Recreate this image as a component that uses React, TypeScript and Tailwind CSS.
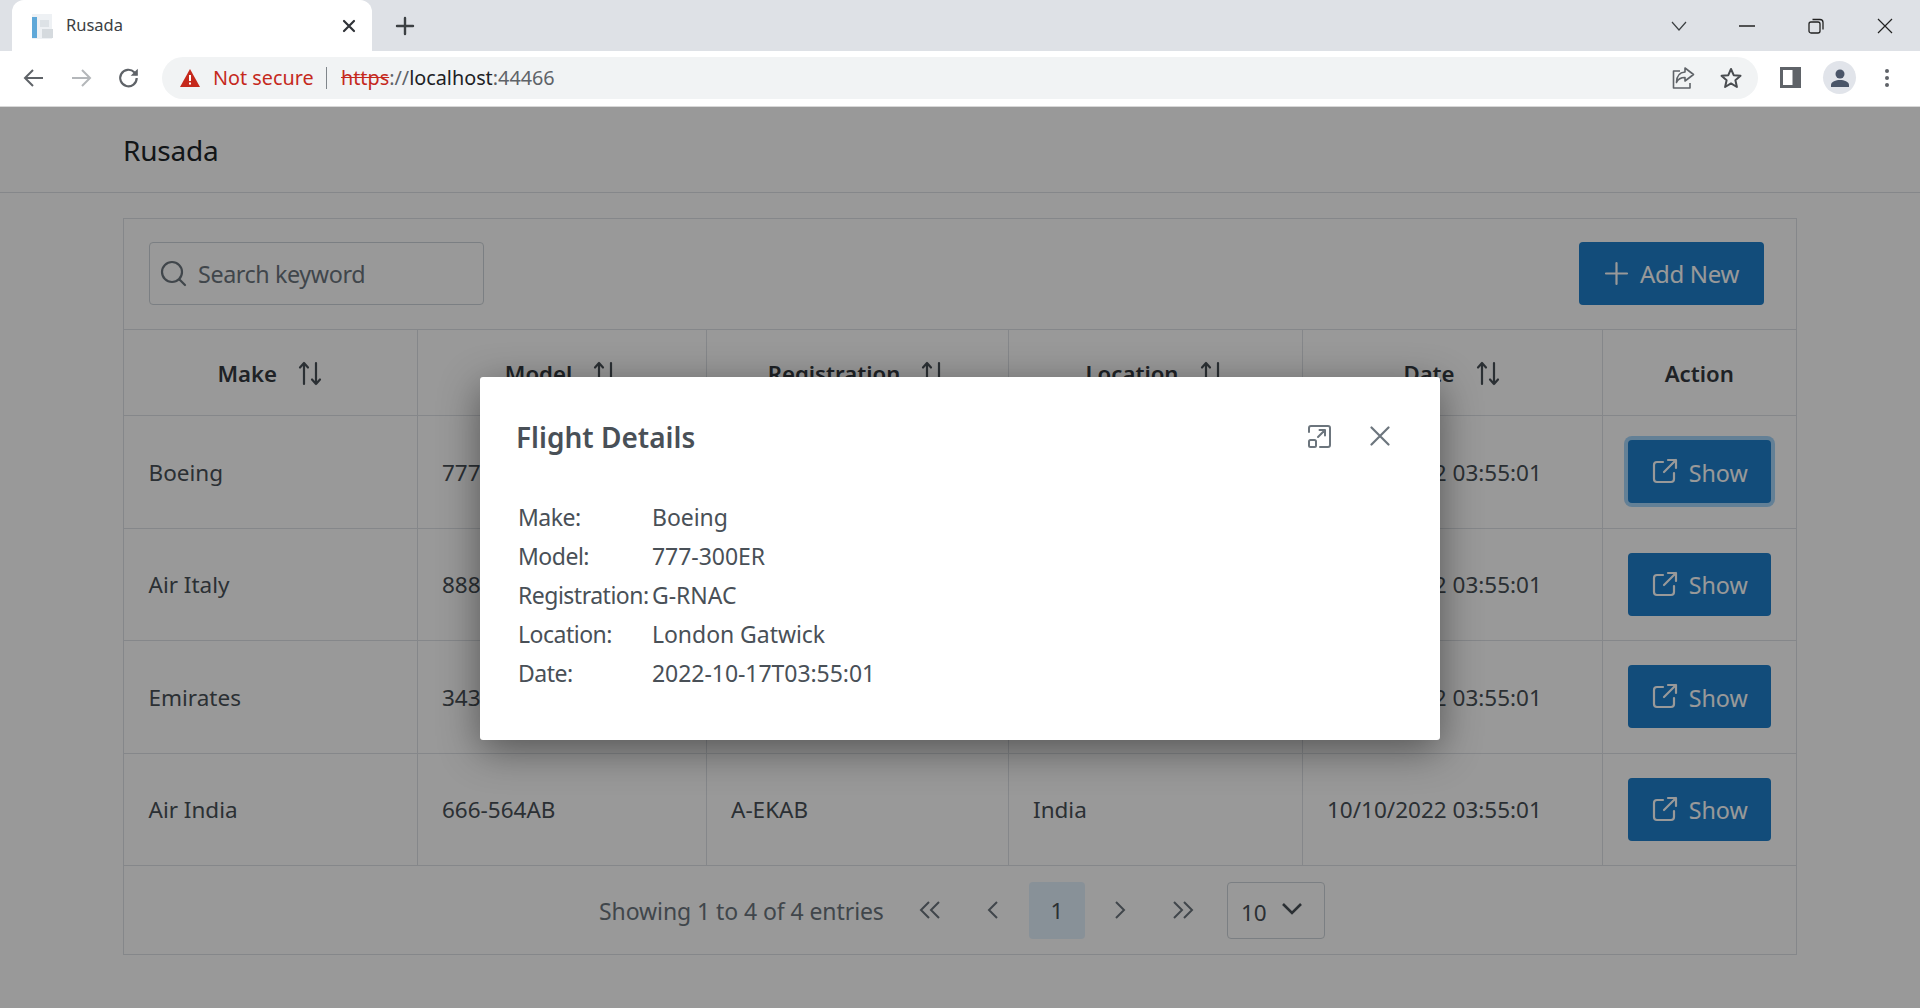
import React from "react";

const rows = [
  ["Boeing", "777-300ER", "G-RNAC", "London Gatwick", "10/17/2022 03:55:01"],
  ["Air Italy", "888-200ER", "A-ITAL", "Italy", "10/16/2022 03:55:01"],
  ["Emirates", "343-400", "U-EMRT", "Dubai", "10/15/2022 03:55:01"],
  ["Air India", "666-564AB", "A-EKAB", "India", "10/10/2022 03:55:01"],
];
const heads = ["Make", "Model", "Registration", "Location", "Date"];
const details = [
  ["Make:", "Boeing"],
  ["Model:", "777-300ER"],
  ["Registration:", "G-RNAC"],
  ["Location:", "London Gatwick"],
  ["Date:", "2022-10-17T03:55:01"],
];

function Sort() {
  return (
    <svg width="26" height="26" viewBox="0 0 26 26" fill="none" stroke="#495057" strokeWidth="2.2" strokeLinecap="round" strokeLinejoin="round">
      <path d="M7 24V3M3 7.500 7 3l4 4.500" />
      <path d="M19 3v21M15 19.500l4 4.500 4-4.500" />
    </svg>
  );
}

function ShowIcon() {
  return (
    <svg width="27" height="27" viewBox="0 0 27 27" fill="none" stroke="currentColor" strokeWidth="2.2" strokeLinecap="round" strokeLinejoin="round">
      <path d="M12 4H6a3 3 0 0 0-3 3v14a3 3 0 0 0 3 3h14a3 3 0 0 0 3-3v-6" />
      <path d="M13 14 25 2M17 2h8v8" />
    </svg>
  );
}

function Tabstrip() {
  return (
    <div className="h-[51px] bg-[#dee1e6] flex items-end pl-[12px] relative shrink-0">
      <div className="w-[360px] h-[51px] bg-white rounded-t-[12px] flex items-center pl-[17px] pr-[16px]">
        <svg width="26" height="28" viewBox="0 0 26 28" className="shrink-0">
          <rect x="3" y="2" width="20" height="25" fill="#eef1f4" />
          <rect x="3" y="5" width="5" height="21" fill="#5fa8d8" />
          <rect x="11" y="8" width="9" height="7" fill="#dde2e6" />
          <rect x="13" y="17" width="11" height="9" fill="#d5dade" />
        </svg>
        <span className="ml-[11px] text-[16.5px] text-[#3c4043] font-['Noto_Sans',sans-serif] flex-1">Rusada</span>
        <svg width="14" height="14" viewBox="0 0 14 14" stroke="#303338" strokeWidth="2.2" strokeLinecap="round">
          <path d="M2 2l10 10M12 2 2 12" />
        </svg>
      </div>
      <div className="h-[51px] flex items-center ml-[23px]">
        <svg width="20" height="20" viewBox="0 0 20 20" stroke="#3c4043" strokeWidth="2.4" strokeLinecap="round">
          <path d="M10 2v16M2 10h16" />
        </svg>
      </div>
      <div className="flex-1 h-[51px] flex items-center justify-end">
        <div className="flex items-center gap-[53px] pr-[27px]">
          <svg width="18" height="12" viewBox="0 0 18 12" fill="none" stroke="#3c4043" strokeWidth="1.2" className="mr-[-2px]"><path d="M2 2l7 8 7-8" /></svg>
          <svg width="16" height="2" viewBox="0 0 16 2" stroke="#222" strokeWidth="1.5"><path d="M0 1h16" /></svg>
          <svg width="16" height="16" viewBox="0 0 16 16" fill="none" stroke="#222" strokeWidth="1.3"><rect x="1" y="4" width="11" height="11" rx="2" /><path d="M4.500 1.500h7.500a3 3 0 0 1 3 3v7" /></svg>
          <svg width="16" height="16" viewBox="0 0 16 16" fill="none" stroke="#222" strokeWidth="1.2"><path d="M1 1l14 14M15 1 1 15" /></svg>
        </div>
      </div>
    </div>
  );
}

function Toolbar() {
  return (
    <div className="h-[56px] bg-white flex items-center shrink-0 border-b border-[#d8d8d8] pb-[2px]">
      <div className="flex items-center pl-[23px] w-[162px]">
        <svg width="21" height="20" viewBox="0 0 21 20" fill="none" stroke="#5f6368" strokeWidth="2"><path d="M20 10H2M10 2l-8 8 8 8" /></svg>
        <svg width="21" height="20" viewBox="0 0 21 20" fill="none" stroke="#b4b7ba" strokeWidth="2" className="ml-[27px]"><path d="M1 10h18M11 2l8 8-8 8" /></svg>
        <svg width="22" height="22" viewBox="0 0 20 20" fill="none" stroke="#5f6368" strokeWidth="2" className="ml-[26px]"><path d="M17 10a7.500 7.500 0 1 1-2.200-5.300L17 7" /><path d="M18 1.500V8h-6.500z" fill="#5f6368" stroke="none" /></svg>
      </div>
      <div className="w-[1596px] h-[42px] bg-[#f1f3f4] rounded-full flex items-center pl-[18px] pr-[14px] font-['Noto_Sans',sans-serif] text-[19.8px] leading-none">
        <svg width="20" height="18" viewBox="0 0 20 18"><path d="M10 0 20 18H0z" fill="#c5291c" /><path d="M9 6h2v6H9zM9 13.500h2v2H9z" fill="#fff" /></svg>
        <span className="ml-[13px] text-[#c5291c] w-[113px] pt-[1px]">Not secure</span>
        <span className="w-px h-[22px] bg-[#80868b]"></span>
        <span className="ml-[14px] text-[#c5291c] line-through pt-[1px]">https</span>
        <span className="text-[#5f6368] pt-[1px]">://</span>
        <span className="text-[#202124] pt-[1px]">localhost</span>
        <span className="text-[#5f6368] pt-[1px]">:44466</span>
        <div className="flex-1"></div>
        <div className="flex items-center gap-[25px] pr-[2px]">
          <svg width="23" height="22" viewBox="0 0 23 22" fill="none" stroke="#5f6368" strokeWidth="1.6" strokeLinejoin="round"><path d="M8 4H1.500v17H18v-5" /><path d="M13 1l8.500 6.500L13 14v-3.500c-4 0-7 1.500-8.500 5 0-6 3-10 8.500-10.500z" /></svg>
          <svg width="22" height="22" viewBox="0 0 22 22" fill="none" stroke="#494c50" strokeWidth="2" strokeLinejoin="round"><path d="M11 2l2.700 6.200 6.800.6-5.100 4.500 1.500 6.700L11 16.400 5.100 20l1.500-6.700L1.500 8.800l6.800-.6z" /></svg>
        </div>
      </div>
      <div className="flex items-center pl-[22px]">
        <svg width="21" height="21" viewBox="0 0 21 21"><path d="M0 0h21v21H0z" fill="#5f6368" /><path d="M3 3h9.500v15H3z" fill="#fff" /></svg>
        <div className="ml-[22px] w-[33px] h-[33px] rounded-full bg-[#e1e4ea] flex items-center justify-center">
          <svg width="20" height="20" viewBox="0 0 20 20" fill="#4a5568"><circle cx="10" cy="6" r="4.500" /><path d="M1 19v-2c0-3.500 5-5 9-5s9 1.500 9 5v2z" /></svg>
        </div>
        <svg width="6" height="20" viewBox="0 0 6 20" fill="#5f6368" className="ml-[28px]"><circle cx="3" cy="3" r="2" /><circle cx="3" cy="10" r="2" /><circle cx="3" cy="17" r="2" /></svg>
      </div>
    </div>
  );
}

function Modal() {
  return (
    <div className="absolute inset-0 bg-black/40">
      <div className="absolute left-[480px] top-[270px] w-[960px] h-[363px] bg-white rounded-[3px] shadow-[0_10px_40px_rgba(0,0,0,0.45)] px-[36px] pt-[42px] text-[#495057]">
        <div className="flex items-center h-[36px]">
          <h2 className="text-[28px] leading-[36px] font-semibold flex-1">Flight Details</h2>
          <svg width="25" height="25" viewBox="0 0 25 25" fill="none" stroke="#6c757d" strokeWidth="2" strokeLinecap="round" strokeLinejoin="round" className="mr-[38px] mb-[2px]">
            <path d="M2 8V4a2 2 0 0 1 2-2h17a2 2 0 0 1 2 2v17a2 2 0 0 1-2 2h-8" />
            <rect x="2" y="16" width="7" height="7" rx="1.500" />
            <path d="M11 13l7-7M12.500 6H18v5.500" />
          </svg>
          <svg width="20" height="20" viewBox="0 0 20 20" fill="none" stroke="#6c757d" strokeWidth="2.2" strokeLinecap="round" className="mr-[14px] mb-[2px]">
            <path d="M1.500 1.500l17 17M18.500 1.500l-17 17" />
          </svg>
        </div>
        <div className="mt-[43px] ml-[2px] text-[23px] leading-[39px]">
          {details.map(([k, v]) => (
            <div key={k} className="flex">
              <span className="w-[134px] whitespace-nowrap tracking-[-0.5px]">{k}</span>
              <span className="tracking-[-0.05px]">{v}</span>
            </div>
          ))}
        </div>
      </div>
    </div>
  );
}

export default function App() {
  const cols = "grid grid-cols-[293.5px_289px_302px_294px_300px_193.5px]";
  return (
    <div className="w-[1920px] h-[1008px] overflow-hidden flex flex-col bg-white font-['Noto_Sans',sans-serif]">
      <Tabstrip />
      <Toolbar />
      <div className="relative flex-1 text-[#495057]">
        <div className="h-[86px] border-b border-[#dee2e6] pl-[123px] flex items-center text-[#212529] text-[28px] tracking-[-0.2px]">Rusada</div>
        <div className="mt-[25px] ml-[123px] w-[1674px] border border-[#dee2e6] text-[22.5px]">
          <div className="h-[111px] flex items-center justify-between pl-[25px] pr-[32px] pb-[2px] border-b border-[#dee2e6]">
            <div className="w-[335px] h-[63px] border border-[#ced4da] rounded-[4px] flex items-center pl-[10px] gap-[11px] text-[#6c757d] text-[23.3px] tracking-[-0.4px]">
              <svg width="27" height="27" viewBox="0 0 27 27" fill="none" stroke="#6c757d" strokeWidth="2.2" strokeLinecap="round"><circle cx="12" cy="12" r="10" /><path d="M19.500 19.500 25 25" /></svg>
              <span className="pt-[3px]">Search keyword</span>
            </div>
            <div className="w-[185px] h-[63px] bg-[#1e7fcb] rounded-[4px] flex items-center justify-center gap-[11px] text-[#fff] text-[24px] tracking-[-0.3px]">
              <svg width="25" height="25" viewBox="0 0 25 25" stroke="currentColor" strokeWidth="2.200" strokeLinecap="round"><path d="M12.500 2v21M2 12.500h21" /></svg>
              <span className="pt-[2px]">Add New</span>
            </div>
          </div>
          <div className={cols + " h-[86px] border-b border-[#dee2e6]"}>
            {heads.map((h) => (
              <div key={h} className="border-r border-[#dee2e6] flex items-center justify-center gap-[20px] font-semibold text-[#343a40] text-[22.2px]">
                <span className="pt-[3px]">{h}</span>
                <Sort />
              </div>
            ))}
            <div className="flex items-center justify-center font-semibold text-[#343a40] text-[22.2px] pt-[3px]">Action</div>
          </div>
          {rows.map((r, i) => (
            <div key={r[0]} className={cols + " h-[112.500px] border-b border-[#dee2e6]"}>
              {r.map((c) => (
                <div key={c} className="border-r border-[#dee2e6] flex items-center pl-[24.5px] pt-[2px] whitespace-nowrap">{c}</div>
              ))}
              <div className="flex items-center justify-center">
                <div className={"w-[143px] h-[63px] bg-[#1e7fcb] rounded-[4px] flex items-center justify-center gap-[11px] text-white text-[23.3px]" + (i === 0 ? " shadow-[0_0_0_4px_#a6d5fa]" : "")}>
                  <ShowIcon />
                  <span className="pt-[3px]">Show</span>
                </div>
              </div>
            </div>
          ))}
          <div className="h-[88px] flex items-center pl-[475px]">
            <span className="w-[320px] text-[#6c757d] text-[23px] whitespace-nowrap tracking-[-0.08px] pt-[2px]">Showing 1 to 4 of 4 entries</span>
            <svg width="22" height="18" viewBox="0 0 22 18" fill="none" stroke="#6c757d" strokeWidth="2" className="mb-[1px]"><path d="M10 1 2 9l8 8M20 1l-8 8 8 8" /></svg>
            <svg width="12" height="18" viewBox="0 0 12 18" fill="none" stroke="#6c757d" strokeWidth="2" className="ml-[46px] mb-[1px]"><path d="M10 1 2 9l8 8" /></svg>
            <div className="ml-[30px] w-[56px] h-[57px] rounded-[4px] bg-[#e3f2fd] flex items-center justify-center text-[#495057] pt-[2px]">1</div>
            <svg width="12" height="18" viewBox="0 0 12 18" fill="none" stroke="#6c757d" strokeWidth="2" className="ml-[29px] mb-[1px]"><path d="M2 1l8 8-8 8" /></svg>
            <svg width="22" height="18" viewBox="0 0 22 18" fill="none" stroke="#6c757d" strokeWidth="2" className="ml-[46px] mb-[1px]"><path d="M2 1l8 8-8 8M12 1l8 8-8 8" /></svg>
            <div className="ml-[33px] w-[98px] h-[57px] border border-[#ced4da] rounded-[4px] flex items-center pl-[13px] gap-[14px] text-[#495057]">
              <span className="pt-[5px]">10</span>
              <svg width="22" height="14" viewBox="0 0 22 14" fill="none" stroke="#495057" strokeWidth="2.6" className="mb-[2px]"><path d="M2 2l9 9 9-9" /></svg>
            </div>
          </div>
        </div>
        <Modal />
      </div>
    </div>
  );
}
